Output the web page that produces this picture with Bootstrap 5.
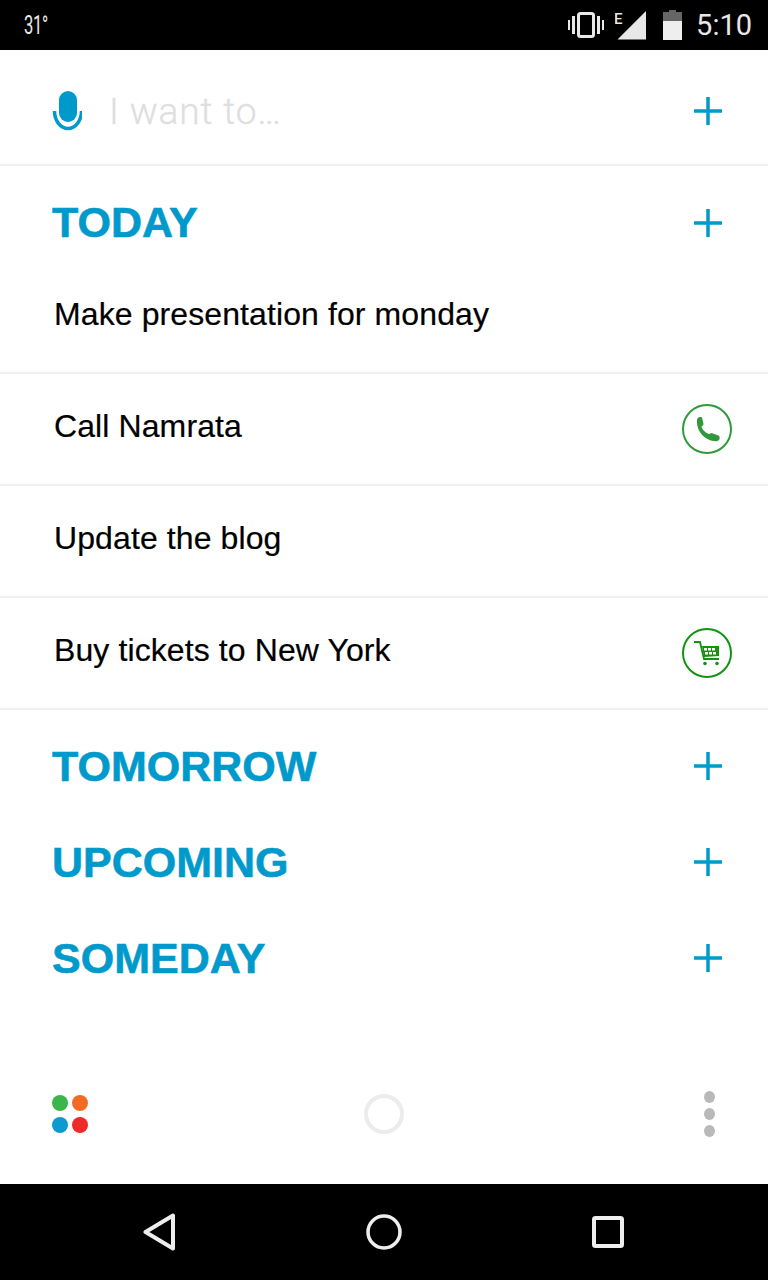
<!DOCTYPE html>
<html lang="en"><head><meta charset="utf-8"><title>Tasks</title>
<link href="https://cdn.jsdelivr.net/npm/bootstrap@5.3.0/dist/css/bootstrap.min.css" rel="stylesheet">
<style>
html,body{margin:0;height:1280px;overflow:hidden;background:#fff}
body{font-family:"Liberation Sans",Arial,sans-serif;color:#000}
.app-shell{width:768px;height:1280px}
.status-strip{height:50px;background:#000;color:#e8e8e8;font-family:Roboto,sans-serif;padding:0 16px 0 24px}
.temp-text{font-size:26px;line-height:50px;transform:scaleX(.64);transform-origin:left center;letter-spacing:-.5px}
.clock-text{font-size:29px;line-height:50px;margin-left:14px;padding-right:0;position:relative;left:0}
.status-icons{margin-top:-1px}
.vib-icon{margin-right:11px}
.bat-icon{margin-left:17px}
.input-row{height:116px;border-bottom:2px solid #f0f0f0;padding:8px 46px 0 52px}
.hint-text{font-family:Roboto,sans-serif;font-weight:300;font-size:37px;letter-spacing:.9px;color:#dedede;margin-left:27px;line-height:1;-webkit-text-stroke:.3px #dedede}
.section-row{height:96px;padding:0 46px 0 52px}
.first-section{height:97px;padding-top:16px}
.section-title{font-size:43px;font-weight:700;color:#0099cc;letter-spacing:0;line-height:1;margin:0;-webkit-text-stroke:.6px #0099cc}
.task-row{height:112px;border-bottom:2px solid #f0f0f0;padding:0 36px 6px 54px;font-size:32px;line-height:1;letter-spacing:.1px;-webkit-text-stroke:.2px #000}
.task-first{height:111px;padding-bottom:8px}
.ring-btn{width:50px;height:50px;flex:none;position:relative;top:3px}
.after-list{padding-top:8px}
.tool-row{height:120px;padding:0 53px 20px 52px;display:grid;grid-template-columns:1fr auto 1fr;align-items:center}
.dot-grid{display:grid;grid-template-columns:16px 16px;gap:6px 4px}
.dot-cell{width:16px;height:16px;border-radius:50%}
.dot-stack{display:flex;flex-direction:column;gap:5px;justify-self:end}
.dot-stack i{display:block;width:11px;height:12px;border-radius:50%;background:#b9b9b9}
.tool-ring{width:40px;height:40px;border:4px solid #ececec;border-radius:50%}
.nav-strip{height:96px;background:#000;padding:0 48px}
.nav-cell{width:224px}
</style></head>
<body>
<div class="app-shell d-flex flex-column">
  <div class="status-strip d-flex align-items-center">
    <span class="temp-text">31°</span>
    <div class="ms-auto d-flex align-items-center">
      <svg class="vib-icon" width="36" height="30" viewBox="0 0 36 30"><g fill="#e8e8e8"><rect x="0" y="10" width="2" height="10"/><rect x="4" y="6" width="3" height="18"/><rect x="29" y="6" width="3" height="18"/><rect x="34" y="10" width="2" height="10"/></g><rect x="10.500" y="3.500" width="15" height="23" rx="2" fill="none" stroke="#e8e8e8" stroke-width="3"/></svg>
      <svg class="status-icons" width="31" height="30" viewBox="0 0 31 30"><path d="M2.500 29.500 L31 1 V29.500 Z" fill="#e8e8e8"/><text x="-1" y="14" font-family="Roboto,sans-serif" font-size="15" font-weight="500" fill="#e8e8e8">E</text></svg>
      <svg class="bat-icon status-icons" width="19" height="30" viewBox="0 0 19 30"><path d="M6 0h7v2h6v9H0V2h6z" fill="#666"/><rect y="11" width="19" height="19" fill="#eee"/></svg>
      <span class="clock-text">5:10</span>
    </div>
  </div>
  <div class="input-row d-flex align-items-center">
    <svg width="30" height="40" viewBox="0 0 30 40"><rect x="7" y="0" width="18" height="31" rx="9" fill="#0099cc"/><path d="M2.500 20a13.500 17.500 0 0 0 27 0" fill="none" stroke="#0099cc" stroke-width="3.500"/></svg>
    <span class="hint-text">I want to…</span>
    <svg class="ms-auto" width="28" height="28" viewBox="0 0 28 28"><path d="M14 0v28M0 14h28" stroke="#0099cc" stroke-width="3.500"/></svg>
  </div>
  <div class="section-row first-section d-flex align-items-center justify-content-between">
    <h2 class="section-title">TODAY</h2>
    <svg width="28" height="28" viewBox="0 0 28 28"><path d="M14 0v28M0 14h28" stroke="#0099cc" stroke-width="3.500"/></svg>
  </div>
  <div class="task-row task-first d-flex align-items-center"><span>Make presentation for monday</span></div>
  <div class="task-row d-flex align-items-center justify-content-between"><span>Call Namrata</span>
    <svg class="ring-btn" viewBox="0 0 50 50"><circle cx="25" cy="25" r="24" fill="none" stroke="#2f9a3a" stroke-width="2"/><path d="M15 16C15 13.500 18 12.500 20 13.500L21.500 20C21.500 21.500 19.500 22 19.500 23C20.500 26 24 29 27 30L29.500 29L36.500 31.500C38.500 33 38 36 35.500 37C28 38.500 14 31 15 16z" fill="#2f9a3a"/></svg>
  </div>
  <div class="task-row d-flex align-items-center"><span>Update the blog</span></div>
  <div class="task-row d-flex align-items-center justify-content-between"><span>Buy tickets to New York</span>
    <svg class="ring-btn" viewBox="0 0 50 50"><circle cx="25" cy="25" r="24" fill="none" stroke="#129412" stroke-width="2"/><path d="M12 14h6l4 17h15" fill="none" stroke="#129412" stroke-width="1.800"/><path d="M20 18h17v10l-15 1z" fill="#129412"/><g fill="#fff"><rect x="22" y="20" width="3" height="2.500"/><rect x="26" y="20" width="3" height="2.500"/><rect x="30" y="20" width="3" height="2.500"/><rect x="23" y="24" width="3" height="2.500"/><rect x="27" y="24" width="3" height="2.500"/><rect x="31" y="24" width="3" height="2.500"/></g><circle cx="23" cy="35.500" r="1.800" fill="#129412"/><circle cx="35" cy="35.500" r="1.800" fill="#129412"/></svg>
  </div>
  <div class="after-list">
    <div class="section-row d-flex align-items-center justify-content-between"><h2 class="section-title">TOMORROW</h2><svg width="28" height="28" viewBox="0 0 28 28"><path d="M14 0v28M0 14h28" stroke="#0099cc" stroke-width="3.500"/></svg></div>
    <div class="section-row d-flex align-items-center justify-content-between"><h2 class="section-title">UPCOMING</h2><svg width="28" height="28" viewBox="0 0 28 28"><path d="M14 0v28M0 14h28" stroke="#0099cc" stroke-width="3.500"/></svg></div>
    <div class="section-row d-flex align-items-center justify-content-between"><h2 class="section-title">SOMEDAY</h2><svg width="28" height="28" viewBox="0 0 28 28"><path d="M14 0v28M0 14h28" stroke="#0099cc" stroke-width="3.500"/></svg></div>
  </div>
  <div class="tool-row mt-auto">
    <div class="dot-grid"><span class="dot-cell" style="background:#3cb54a"></span><span class="dot-cell" style="background:#f26b24"></span><span class="dot-cell" style="background:#0c9ad0"></span><span class="dot-cell" style="background:#ee2a2a"></span></div>
    <div class="tool-ring"></div>
    <div class="dot-stack"><i></i><i></i><i></i></div>
  </div>
  <div class="nav-strip d-flex align-items-center">
    <div class="nav-cell d-flex justify-content-center"><svg width="34" height="38" viewBox="0 0 34 38"><path d="M30 2.500V35.500L2.500 19z" fill="none" stroke="#eee" stroke-width="4" stroke-linejoin="round"/></svg></div>
    <div class="nav-cell d-flex justify-content-center"><svg width="36" height="36" viewBox="0 0 36 36"><circle cx="18" cy="18" r="16" fill="none" stroke="#eee" stroke-width="3.500"/></svg></div>
    <div class="nav-cell d-flex justify-content-center"><svg width="32" height="32" viewBox="0 0 32 32"><rect x="2" y="2" width="28" height="28" rx="1.500" fill="none" stroke="#eee" stroke-width="4"/></svg></div>
  </div>
</div>
</body></html>
